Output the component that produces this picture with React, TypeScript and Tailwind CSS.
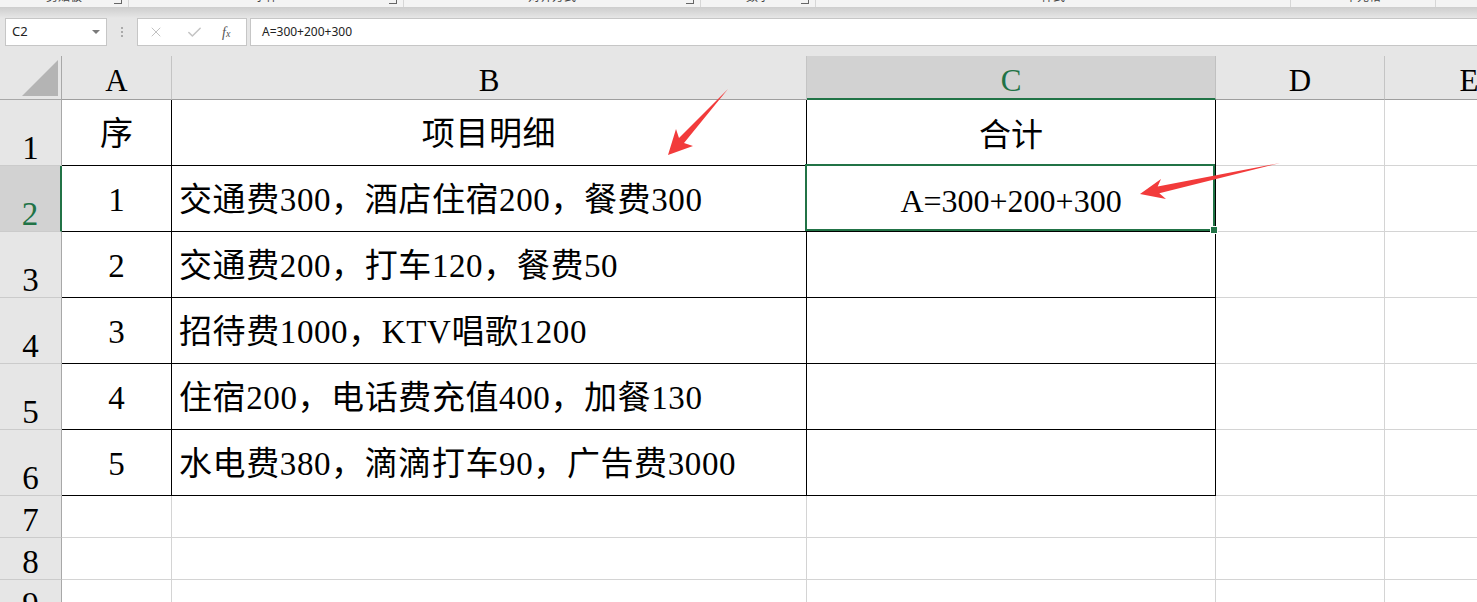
import { X, Check } from 'lucide-react'

const COLS = ['A', 'B', 'C', 'D', 'E']

const cellFont = {
  fontFamily: '"Liberation Serif", "Noto Sans CJK SC", serif',
}

type Row = { n: number; h: string; a?: string; b?: string; c?: string }

const rows: Row[] = [
  { n: 1, h: 'h-[66px]', a: '序', b: '项目明细', c: '合计' },
  { n: 2, h: 'h-[66px]', a: '1', b: '交通费300，酒店住宿200，餐费300', c: 'A=300+200+300' },
  { n: 3, h: 'h-[66px]', a: '2', b: '交通费200，打车120，餐费50' },
  { n: 4, h: 'h-[66px]', a: '3', b: '招待费1000，KTV唱歌1200' },
  { n: 5, h: 'h-[66px]', a: '4', b: '住宿200，电话费充值400，加餐130' },
  { n: 6, h: 'h-[66px]', a: '5', b: '水电费380，滴滴打车90，广告费3000' },
  { n: 7, h: 'h-[42px]' },
  { n: 8, h: 'h-[42px]' },
  { n: 9, h: 'h-[42px]' },
]

// ribbon group labels, only their lower edge peeks out at the top
const ribbonGroups = [
  { w: 'w-[129px]', label: '剪贴板', launcher: true },
  { w: 'w-[275px]', label: '字体', launcher: true },
  { w: 'w-[297px]', label: '对齐方式', launcher: true },
  { w: 'w-[115px]', label: '数字', launcher: true },
  { w: 'w-[475px]', label: '样式', launcher: false },
  { w: 'w-[145px]', label: '单元格', launcher: false },
]

const GRID = 'grid grid-cols-[62px_110px_635px_409px_169px_169px] w-[1554px]'

function Ribbon() {
  return (
    <div className="h-[7px] bg-[#f3f3f3] flex overflow-hidden text-[12px] text-[#444]" style={{ fontFamily: '"Noto Sans CJK SC", sans-serif' }}>
      {ribbonGroups.map((g) => (
        <div key={g.label} className={`${g.w} relative border-r border-[#d6d6d6] flex justify-center`}>
          <span className="-mt-[12px] leading-[16px]">{g.label}</span>
          {g.launcher && (
            <span className="absolute right-[6px] -top-[4px] w-[8px] h-[8px] border-r border-b border-[#666]" />
          )}
        </div>
      ))}
    </div>
  )
}

function FormulaBar() {
  return (
    <div className="h-[49px] bg-[#e6e6e6]">
      <div className="h-[11px] bg-gradient-to-b from-[#cdcdcd] to-[#e6e6e6]" />
      <div className="h-[28px] flex items-stretch text-[13px] text-[#222]" style={{ fontFamily: '"Noto Sans", "Liberation Sans", sans-serif' }}>
        <div className="ml-[5px] w-[102px] bg-white border border-[#c6c6c6] flex items-center justify-between pl-[6px] pr-[6px]">
          <span>C2</span>
          <span className="w-0 h-0 border-l-[4px] border-r-[4px] border-t-[4px] border-l-transparent border-r-transparent border-t-[#7a7a7a]" />
        </div>
        <div className="w-[30px] flex flex-col items-center justify-center gap-[2px]">
          <span className="w-[2px] h-[2px] bg-[#aaa]" />
          <span className="w-[2px] h-[2px] bg-[#aaa]" />
          <span className="w-[2px] h-[2px] bg-[#aaa]" />
        </div>
        <div className="w-[110px] bg-white border border-[#c6c6c6] flex items-center pl-[10px] text-[#bdbdbd]">
          <X size={16} strokeWidth={1.4} />
          <Check size={17} strokeWidth={2.2} className="ml-[22px] text-[#c4c4c4]" />
          <span className="ml-[19px] italic text-[#555] text-[14px]" style={{ fontFamily: '"Liberation Serif", serif' }}>
            f<span className="text-[10px]">x</span>
          </span>
        </div>
        <div className="ml-[3px] flex-1 bg-white border border-[#c6c6c6] border-r-0 flex items-center pl-[11px] text-[12px]">
          A=300+200+300
        </div>
      </div>
    </div>
  )
}

function Header() {
  return (
    <div className={`${GRID} h-[44px] bg-[#e6e6e6]`} style={cellFont}>
      <div className="border-r border-b border-[#a8a8a8] relative">
        <svg width="40" height="40" className="absolute left-[21px] top-[4px]">
          <polygon points="37,0 37,36 1,36" fill="#b4b4b4" />
        </svg>
      </div>
      {COLS.map((c) => {
        const sel = c === 'C'
        return (
          <div
            key={c}
            className={`flex items-center justify-center pt-[6px] text-[31px] leading-none border-r ${
              sel
                ? 'bg-[#d2d2d2] text-[#217346] border-r-[#c0c0c0] border-b-2 border-b-[#217346]'
                : 'text-black border-r-[#c4c4c4] border-b border-b-[#9e9e9e]'
            }`}
          >
            {c}
          </div>
        )
      })}
    </div>
  )
}

function DataRow({ row }: { row: Row }) {
  const inTable = row.n <= 6
  const sel = row.n === 2
  const bottom = inTable ? 'border-b-black' : 'border-b-[#d4d4d4]'
  const right = inTable ? 'border-r-black' : 'border-r-[#d4d4d4]'
  return (
    <div className={`${GRID} ${row.h}`} style={cellFont}>
      <div
        className={`flex items-end justify-center text-[33px] leading-none border-b border-b-[#cbcbcb] ${
          sel
            ? 'bg-[#d2d2d2] text-[#217346] border-r-2 border-r-[#217346]'
            : 'bg-[#e6e6e6] text-black border-r border-r-[#a8a8a8]'
        }`}
      >
        {row.n}
      </div>
      <div className={`flex items-center justify-center pt-[5px] text-[33px] border-r border-b ${bottom} ${right}`}>
        {row.a}
      </div>
      <div
        className={`flex items-center pt-[5px] text-[33px] border-r border-b ${bottom} ${right} ${
          row.n === 1 ? 'justify-center' : 'justify-start pl-[7px]'
        } tracking-[0.6px] whitespace-nowrap`}
      >
        {row.b}
      </div>
      <div className={`relative flex items-center justify-center pt-[5px] text-[32px] border-r border-b ${bottom} ${right}`}>
        {row.c}
        {sel && (
          <div className="absolute -left-[2px] -top-[2px] right-0 bottom-0 border-2 border-[#217346] z-10">
            <span className="absolute -right-[5px] -bottom-[5px] w-[8px] h-[8px] bg-[#217346] border border-white" />
          </div>
        )}
      </div>
      <div className="border-r border-b border-[#d4d4d4]" />
      <div className="border-r border-b border-[#d4d4d4]" />
    </div>
  )
}

function Arrows() {
  return (
    <svg width="1477" height="602" className="absolute left-0 top-0 pointer-events-none z-20">
      <polygon points="668,155 676,129 679,138 728,89 684,143 693,146" fill="#f23b3b" />
      <polygon points="1140,194 1161,179 1157.7,186.5 1280,163 1159.3,193.3 1166,199" fill="#f23b3b" />
    </svg>
  )
}

export default function App() {
  return (
    <div className="relative w-[1477px] h-[602px] overflow-hidden bg-white">
      <Ribbon />
      <FormulaBar />
      <Header />
      {rows.map((r) => (
        <DataRow key={r.n} row={r} />
      ))}
      <Arrows />
    </div>
  )
}
